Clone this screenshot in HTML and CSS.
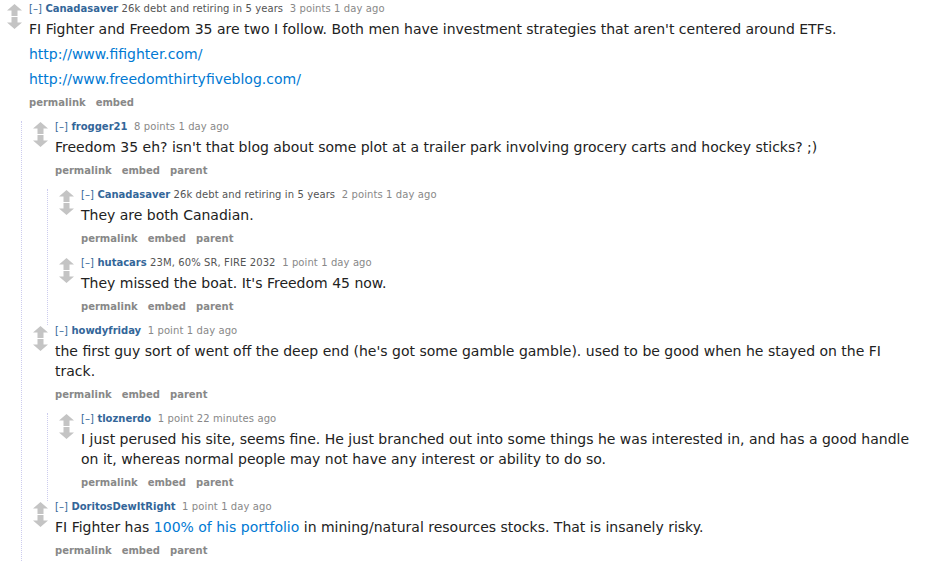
FILE: index.html
```html
<!DOCTYPE html>
<html>
<head>
<meta charset="utf-8">
<link rel="stylesheet" href="styles.css">
</head>
<body>
<div class="sitetable">
  <div class="comment">
    <div class="midcol">
      <svg class="arrow" viewBox="0 0 15 12"><polygon points="7.5,0 15,6.5 10.5,6.5 10.5,12 4.5,12 4.5,6.5 0,6.5"/></svg>
      <svg class="arrow" viewBox="0 0 15 12"><polygon points="7.5,12 15,5.5 10.5,5.5 10.5,0 4.5,0 4.5,5.5 0,5.5"/></svg>
    </div>
    <div class="entry">
      <p class="tagline"><a class="expand">[–]</a> <a class="author">Canadasaver</a> <span class="flair">26k debt and retiring in 5 years</span>&nbsp; <span class="score">3 points</span> <time>1 day ago</time></p>
      <div class="md">
        <p>FI Fighter and Freedom 35 are two I follow. Both men have investment strategies that aren't centered around ETFs.</p>
        <p><a href="#">http://www.fifighter.com/</a></p>
        <p><a href="#">http://www.freedomthirtyfiveblog.com/</a></p>
      </div>
      <ul class="buttons"><li>permalink</li><li>embed</li></ul>
    </div>
  </div>
  <div class="child">
    <div class="comment">
      <div class="midcol">
        <svg class="arrow" viewBox="0 0 15 12"><polygon points="7.5,0 15,6.5 10.5,6.5 10.5,12 4.5,12 4.5,6.5 0,6.5"/></svg>
        <svg class="arrow" viewBox="0 0 15 12"><polygon points="7.5,12 15,5.5 10.5,5.5 10.5,0 4.5,0 4.5,5.5 0,5.5"/></svg>
      </div>
      <div class="entry">
        <p class="tagline"><a class="expand">[–]</a> <a class="author">frogger21</a>&nbsp; <span class="score">8 points</span> <time>1 day ago</time></p>
        <div class="md"><p>Freedom 35 eh? isn't that blog about some plot at a trailer park involving grocery carts and hockey sticks? ;)</p></div>
        <ul class="buttons"><li>permalink</li><li>embed</li><li>parent</li></ul>
      </div>
    </div>
    <div class="child">
      <div class="comment">
        <div class="midcol">
          <svg class="arrow" viewBox="0 0 15 12"><polygon points="7.5,0 15,6.5 10.5,6.5 10.5,12 4.5,12 4.5,6.5 0,6.5"/></svg>
          <svg class="arrow" viewBox="0 0 15 12"><polygon points="7.5,12 15,5.5 10.5,5.5 10.5,0 4.5,0 4.5,5.5 0,5.5"/></svg>
        </div>
        <div class="entry">
          <p class="tagline"><a class="expand">[–]</a> <a class="author">Canadasaver</a> <span class="flair">26k debt and retiring in 5 years</span>&nbsp; <span class="score">2 points</span> <time>1 day ago</time></p>
          <div class="md"><p>They are both Canadian.</p></div>
          <ul class="buttons"><li>permalink</li><li>embed</li><li>parent</li></ul>
        </div>
      </div>
      <div class="comment">
        <div class="midcol">
          <svg class="arrow" viewBox="0 0 15 12"><polygon points="7.5,0 15,6.5 10.5,6.5 10.5,12 4.5,12 4.5,6.5 0,6.5"/></svg>
          <svg class="arrow" viewBox="0 0 15 12"><polygon points="7.5,12 15,5.5 10.5,5.5 10.5,0 4.5,0 4.5,5.5 0,5.5"/></svg>
        </div>
        <div class="entry">
          <p class="tagline"><a class="expand">[–]</a> <a class="author">hutacars</a> <span class="flair">23M, 60% SR, FIRE 2032</span>&nbsp; <span class="score">1 point</span> <time>1 day ago</time></p>
          <div class="md"><p>They missed the boat. It's Freedom 45 now.</p></div>
          <ul class="buttons"><li>permalink</li><li>embed</li><li>parent</li></ul>
        </div>
      </div>
    </div>
    <div class="comment">
      <div class="midcol">
        <svg class="arrow" viewBox="0 0 15 12"><polygon points="7.5,0 15,6.5 10.5,6.5 10.5,12 4.5,12 4.5,6.5 0,6.5"/></svg>
        <svg class="arrow" viewBox="0 0 15 12"><polygon points="7.5,12 15,5.5 10.5,5.5 10.5,0 4.5,0 4.5,5.5 0,5.5"/></svg>
      </div>
      <div class="entry">
        <p class="tagline"><a class="expand">[–]</a> <a class="author">howdyfriday</a>&nbsp; <span class="score">1 point</span> <time>1 day ago</time></p>
        <div class="md"><p>the first guy sort of went off the deep end (he's got some gamble gamble). used to be good when he stayed on the FI track.</p></div>
        <ul class="buttons"><li>permalink</li><li>embed</li><li>parent</li></ul>
      </div>
    </div>
    <div class="child">
      <div class="comment">
        <div class="midcol">
          <svg class="arrow" viewBox="0 0 15 12"><polygon points="7.5,0 15,6.5 10.5,6.5 10.5,12 4.5,12 4.5,6.5 0,6.5"/></svg>
          <svg class="arrow" viewBox="0 0 15 12"><polygon points="7.5,12 15,5.5 10.5,5.5 10.5,0 4.5,0 4.5,5.5 0,5.5"/></svg>
        </div>
        <div class="entry">
          <p class="tagline"><a class="expand">[–]</a> <a class="author">tloznerdo</a>&nbsp; <span class="score">1 point</span> <time>22 minutes ago</time></p>
          <div class="md"><p>I just perused his site, seems fine. He just branched out into some things he was interested in, and has a good handle on it, whereas normal people may not have any interest or ability to do so.</p></div>
          <ul class="buttons"><li>permalink</li><li>embed</li><li>parent</li></ul>
        </div>
      </div>
    </div>
    <div class="comment">
      <div class="midcol">
        <svg class="arrow" viewBox="0 0 15 12"><polygon points="7.5,0 15,6.5 10.5,6.5 10.5,12 4.5,12 4.5,6.5 0,6.5"/></svg>
        <svg class="arrow" viewBox="0 0 15 12"><polygon points="7.5,12 15,5.5 10.5,5.5 10.5,0 4.5,0 4.5,5.5 0,5.5"/></svg>
      </div>
      <div class="entry">
        <p class="tagline"><a class="expand">[–]</a> <a class="author">DoritosDewItRight</a>&nbsp; <span class="score">1 point</span> <time>1 day ago</time></p>
        <div class="md"><p>FI Fighter has <a href="#">100% of his portfolio</a> in mining/natural resources stocks. That is insanely risky.</p></div>
        <ul class="buttons"><li>permalink</li><li>embed</li><li>parent</li></ul>
      </div>
    </div>
  </div>
</div>
</body>
</html>
```
FILE: styles.css
```css
html, body {
  margin: 0;
  padding: 0;
  background: #ffffff;
}
body {
  font-family: "DejaVu Sans", Verdana, sans-serif;
  color: #222222;
  overflow: hidden;
}
.sitetable {
  padding: 3px 0 0 1px;
}
.comment {
  display: flex;
  padding-left: 6px;
}
.midcol {
  width: 15px;
  flex: none;
  display: flex;
  flex-direction: column;
  gap: 1px;
  padding-top: 1px;
}
.arrow {
  width: 15px;
  height: 12px;
  flex: none;
  display: block;
  fill: #c4c4c4;
}
.entry {
  margin-left: 7px;
  flex: 1;
  min-width: 0;
}
.tagline {
  margin: 0;
  font-size: 10px;
  line-height: 12px;
  letter-spacing: 0.1px;
  color: #888888;
  white-space: nowrap;
}
.expand {
  color: #336699;
}
.author {
  color: #336699;
  font-weight: bold;
  letter-spacing: 0;
}
.flair {
  color: #545454;
}
.md {
  margin-top: 4px;
  font-size: 14px;
  line-height: 20px;
  color: #222222;
  padding-right: 12px;
}
.md p {
  margin: 0 0 5px 0;
}
.md p:last-child {
  margin-bottom: 0;
}
.md a {
  color: #0079d3;
  text-decoration: none;
}
.buttons {
  list-style: none;
  margin: 8px 0 0 0;
  padding: 0 0 12px 0;
  display: flex;
  gap: 10px;
  font-size: 10px;
  line-height: 12px;
  font-weight: bold;
  color: #888888;
}
.child {
  margin-left: 20px;
  border-left: 1px dotted #ccccee;
  padding-left: 5px;
}
```
